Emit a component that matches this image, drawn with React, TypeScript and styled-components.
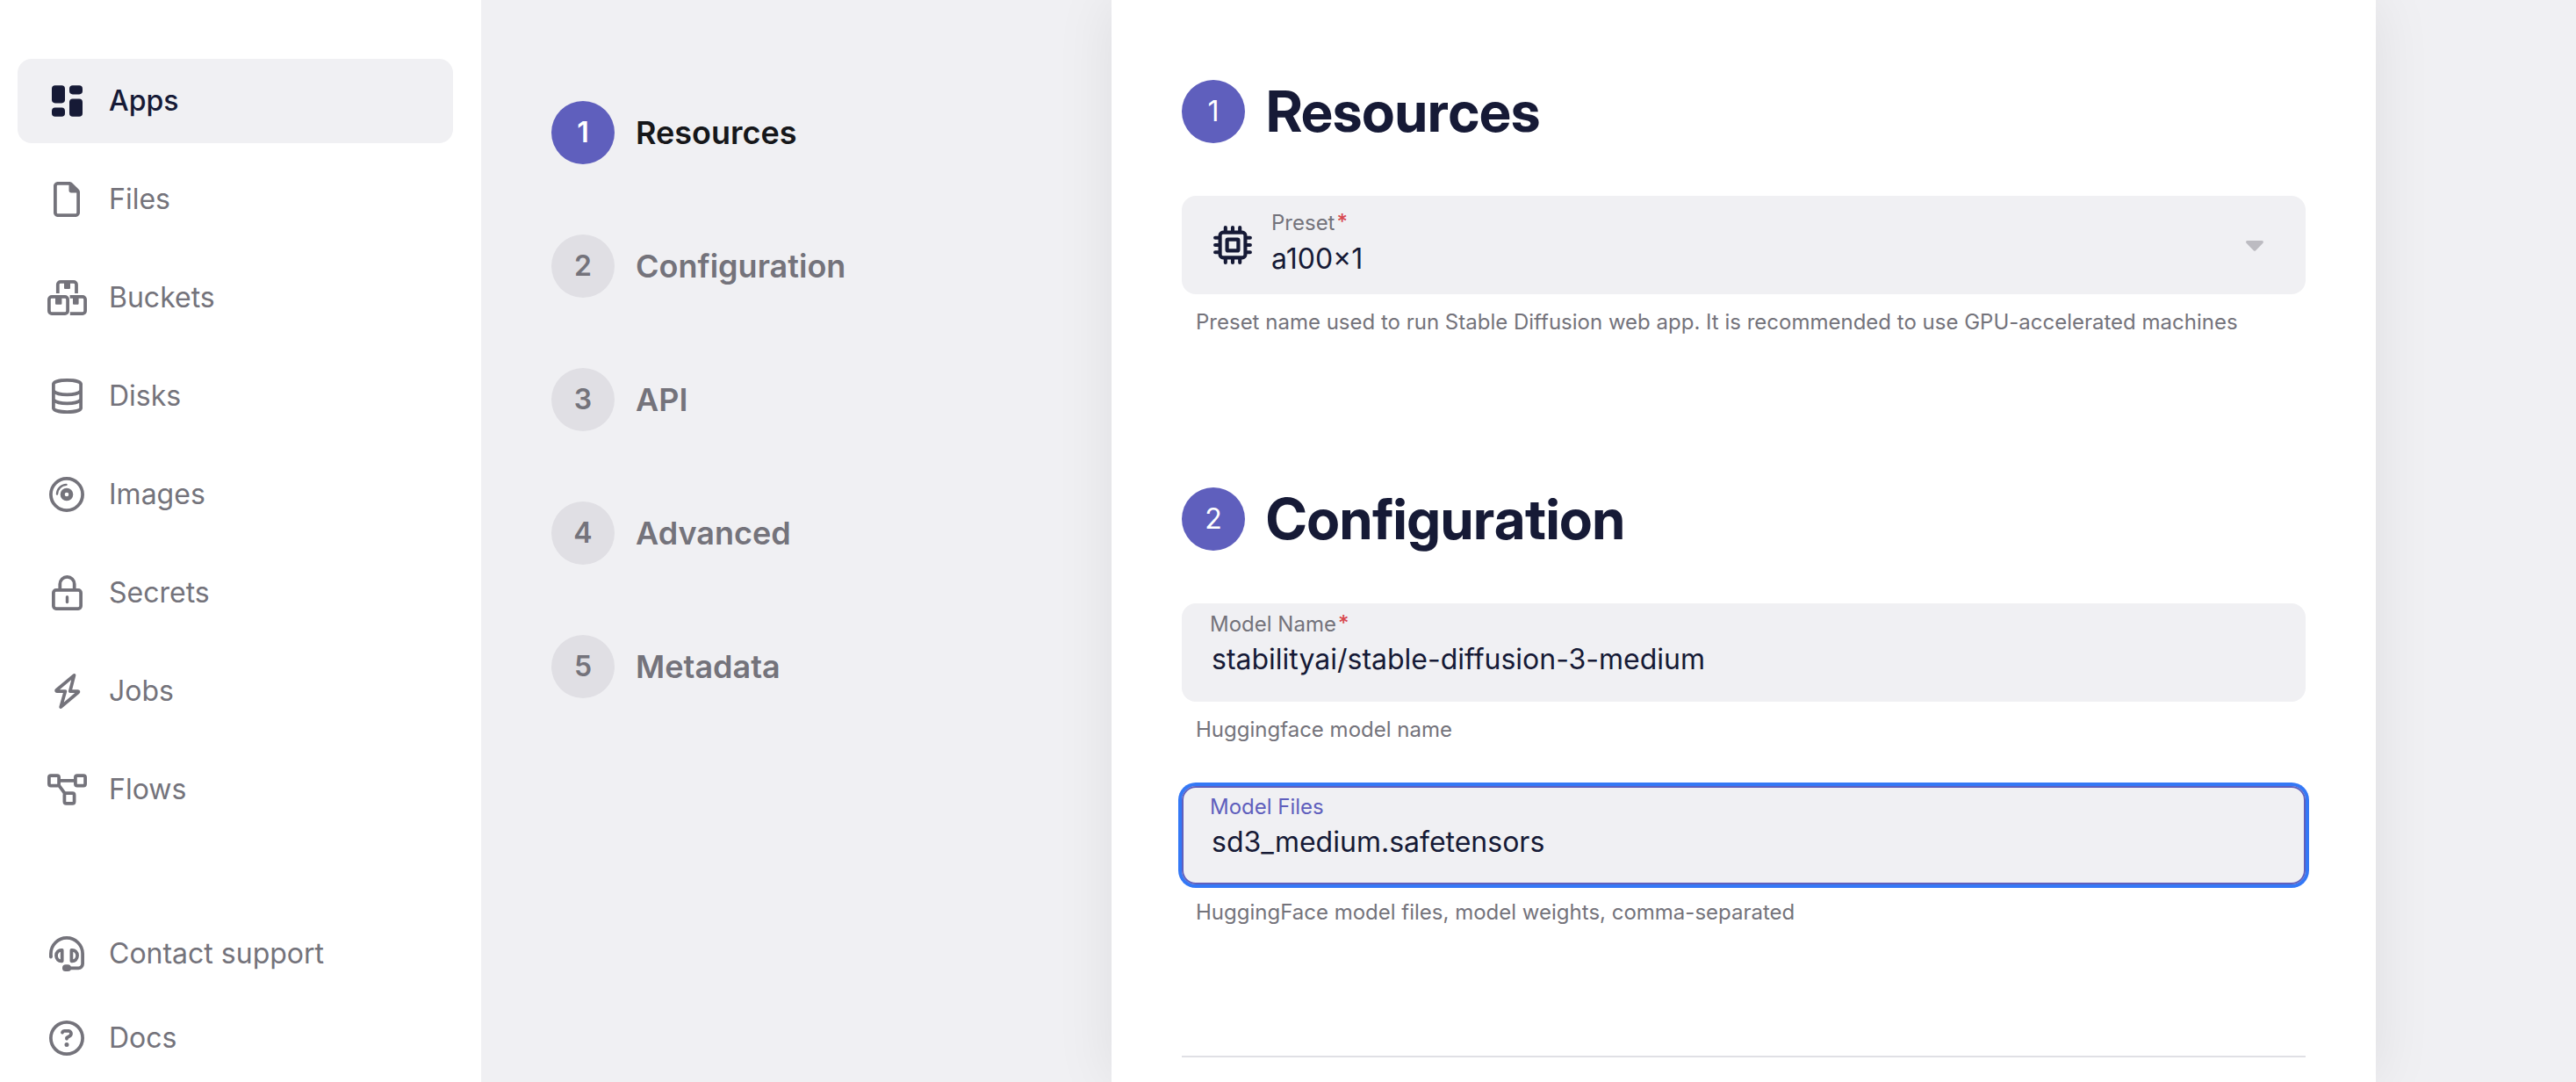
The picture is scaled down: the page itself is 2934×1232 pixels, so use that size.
import React from "react";
import styled, { createGlobalStyle, css } from "styled-components";
import { FaRegCircleQuestion, FaRegFile } from "react-icons/fa6";

const color = {
  page: "#f0f0f3",
  surface: "#ffffff",
  ink: "#161a36",
  black: "#16171a",
  muted: "#74737b",
  accent: "#5f5fbd",
  badge: "#e0dfe4",
  line: "#e0e0e5",
  ring: "#3478f6",
  caret: "#bcbbc1",
  danger: "#d8494f",
};

const GlobalStyle = createGlobalStyle`
  *, *::before, *::after { box-sizing: border-box; }
  body {
    margin: 0;
    background: ${color.page};
    color: ${color.ink};
    font-family: Inter, "Liberation Sans", sans-serif;
    font-size: 32px;
    font-variation-settings: "opsz" 16;
    line-height: 40px;
  }
`;

const Layout = styled.div`
  display: flex;
  min-height: 100vh;
`;

const Sidebar = styled.aside`
  flex: 0 0 548px;
  padding: 67px 32px 0 20px;
  background: ${color.surface};
`;

const NavList = styled.nav<{ $gap: number }>`
  display: flex;
  flex-direction: column;
  gap: ${(p) => p.$gap}px;

  & + & {
    margin-top: 91px;
  }
`;

const NavLink = styled.a<{ $active?: boolean }>`
  display: flex;
  align-items: center;
  gap: 24px;
  height: 96px;
  padding: 0 32px;
  border-radius: 16px;
  color: ${color.muted};
  text-decoration: none;

  ${(p) =>
    p.$active &&
    css`
      background: ${color.page};
      color: ${color.ink};
      font-weight: 500;
    `}
`;

const IconSlot = styled.span`
  display: flex;
  flex: none;
  align-items: center;
  justify-content: center;
  width: 48px;
  height: 48px;
`;

const Main = styled.main`
  display: flex;
  flex: 1;
  min-width: 0;
`;

const StepList = styled.ol`
  display: flex;
  flex: 0 0 718px;
  flex-direction: column;
  gap: 80px;
  margin: 0;
  padding: 115px 80px 0;
  list-style: none;
`;

const StepLink = styled.a<{ $active?: boolean }>`
  display: flex;
  align-items: center;
  gap: 24px;
  color: ${(p) => (p.$active ? color.black : color.muted)};
  font-size: 36px;
  font-weight: 600;
  font-variation-settings: "opsz" 18;
  text-decoration: none;
`;

const Badge = styled.span<{ $filled?: boolean; $strong?: boolean }>`
  display: flex;
  flex: none;
  align-items: center;
  justify-content: center;
  width: 72px;
  height: 72px;
  border-radius: 50%;
  background: ${(p) => (p.$filled ? color.accent : color.badge)};
  color: ${(p) => (p.$filled ? color.surface : color.muted)};
  font-size: 32px;
  font-weight: ${(p) => (p.$strong ? 600 : 400)};
`;

const Panel = styled.form`
  flex: 0 1 1440px;
  min-width: 0;
  padding: 91px 80px 28px;
  background: ${color.surface};
  box-shadow: 0 0 64px rgba(0, 0, 0, 0.08);
`;

const Section = styled.section`
  & + & {
    margin-top: 124px;
  }
`;

const SectionHeader = styled.header`
  display: flex;
  align-items: center;
  gap: 24px;
  margin-bottom: 60px;
`;

const Title = styled.h2`
  margin: 0;
  font-family: "Inter Display", Inter, "Liberation Sans", sans-serif;
  font-size: 64px;
  font-weight: 700;
  font-variation-settings: "opsz" 32;
  line-height: 72px;
`;

const Field = styled.div`
  padding-bottom: 48px;
`;

const FieldBox = styled.div<{ $focused?: boolean }>`
  display: flex;
  height: 112px;
  padding: 0 32px;
  border-radius: 16px;
  background: ${color.page};
  box-shadow: ${(p) =>
    p.$focused ? `inset 0 0 0 2px ${color.accent}, 0 0 0 4px ${color.ring}` : "none"};
`;

const FieldText = styled.div`
  display: flex;
  flex: 1;
  flex-direction: column;
  gap: 5px;
  min-width: 0;
  padding-top: 9px;
`;

const PresetBox = styled(FieldBox)`
  align-items: center;
  gap: 20px;
  padding: 0 38px 0 34px;

  ${FieldText} {
    align-self: stretch;
    gap: 6px;
    padding-top: 16px;
  }
`;

const Label = styled.label<{ $focused?: boolean }>`
  display: flex;
  align-items: flex-start;
  gap: 2px;
  color: ${(p) => (p.$focused ? color.accent : color.muted)};
  font-size: 24px;
  font-variation-settings: "opsz" 14;
  line-height: 30px;
`;

const Required = styled.span`
  color: ${color.danger};
  font-weight: 500;
  line-height: 28px;
`;

const control = css`
  width: 100%;
  height: 40px;
  border: 0;
  outline: 0;
  background: transparent;
  color: ${color.ink};
  font: inherit;
  font-variation-settings: "opsz" 16;
`;

const Input = styled.input`
  ${control}
  padding: 0 2px;
`;

const Select = styled.select`
  ${control}
  padding: 0;
  appearance: none;
`;

const Help = styled.p`
  margin: 16px 0 0;
  padding: 0 16px;
  color: ${color.muted};
  font-size: 24px;
  font-variation-settings: "opsz" 14;
  line-height: 32px;
`;

const Divider = styled.hr`
  height: 2px;
  margin: 99px 0 0;
  border: 0;
  background: ${color.line};
`;

function Line({ children, width = 3.75 }: { children: React.ReactNode; width?: number }) {
  return (
    <svg
      width="48"
      height="48"
      viewBox="0 0 48 48"
      fill="none"
      stroke="currentColor"
      strokeWidth={width}
      aria-hidden="true"
    >
      {children}
    </svg>
  );
}

const AppsIcon = () => (
  <svg width="48" height="48" viewBox="0 0 48 48" fill="currentColor" aria-hidden="true">
    <rect x="7" y="6.2" width="15" height="20.2" rx="3.8" />
    <rect x="27" y="6.2" width="15" height="10.2" rx="3.8" />
    <rect x="7" y="31.4" width="15" height="10.4" rx="3.8" />
    <rect x="27" y="21.4" width="15" height="20.4" rx="3.8" />
  </svg>
);

const BucketsIcon = () => (
  <Line>
    <path d="M13.8 19V9a3.1 3.1 0 0 1 3.1-3.1h15A3.1 3.1 0 0 1 35 9v10" />
    <rect x="3.9" y="22.9" width="21.2" height="19.2" rx="3.1" />
    <path d="M27.6 22.9h14.4a3.1 3.1 0 0 1 3.1 3.1v13a3.1 3.1 0 0 1-3.1 3.1H27.8" />
    <path
      d="M21 5h7v8a1 1 0 0 1-1 1h-5a1 1 0 0 1-1-1zM11 22h7.4v8.7a1 1 0 0 1-1 1H12a1 1 0 0 1-1-1zM31 22h6.6v8.7a1 1 0 0 1-1 1H32a1 1 0 0 1-1-1z"
      fill="currentColor"
      stroke="none"
    />
  </Line>
);

const DisksIcon = () => (
  <Line>
    <path d="M8.9 10.2C9.4 7.7 15.6 5.9 24.5 5.9s15.1 1.8 15.6 4.3v27.6c-.5 2.5-6.7 4.3-15.6 4.3S9.4 40.3 8.9 37.8z" />
    <path d="M8.9 18.3c2.5 2.4 8.5 4 15.6 4s13.1-1.6 15.6-4M8.9 28.3c2.5 2.4 8.5 4 15.6 4s13.1-1.6 15.6-4" />
  </Line>
);

const ImagesIcon = () => (
  <Line>
    <circle cx="24" cy="24" r="18.1" />
    <circle cx="24" cy="24" r="4.8" strokeWidth="5" />
    <path d="M13 23.5A10.8 10.8 0 0 1 23.5 12.9" strokeWidth="2.4" strokeLinecap="round" />
  </Line>
);

const SecretsIcon = () => (
  <Line>
    <rect x="8.9" y="20.9" width="31.2" height="21.2" rx="3" />
    <path d="M16.3 20.5V14a8.2 8.2 0 0 1 16.4 0v6.5" />
    <path d="M24.5 28.7v5.8" strokeWidth="3.4" strokeLinecap="round" />
  </Line>
);

const JobsIcon = () => (
  <Line>
    <path
      d="M32.5 5.9 12.4 22.8c-.6.5-.3 1.2.4 1.2h9.6L17.2 42.1 37.1 25.2c.6-.5.3-1.2-.4-1.2h-8.9z"
      strokeLinejoin="round"
    />
  </Line>
);

const FlowsIcon = () => (
  <Line>
    <rect x="3.9" y="8.1" width="11.2" height="11.4" rx="2" />
    <rect x="33.9" y="8.1" width="11.2" height="11.4" rx="2" />
    <rect x="21.4" y="28.2" width="11.2" height="11.6" rx="2" />
    <path d="M16 13.9h17M14.6 18.7l7.4 10" />
  </Line>
);

const SupportIcon = () => (
  <Line>
    <path d="M5.9 27.5V24a18.1 18.1 0 0 1 36.2 0v11.5a4.8 4.8 0 0 1-4.8 4.8H26" />
    <path d="M5.9 27v.6" strokeLinecap="round" />
    <path
      d="M18.7 19.9v12.4c-3.9.4-6.7-2.3-6.7-6.2s2.8-6.6 6.7-6.2zM29.4 19.9v12.4c3.9.4 6.7-2.3 6.7-6.2s-2.8-6.6-6.7-6.2z"
      strokeLinejoin="round"
    />
    <rect x="19" y="36.3" width="10" height="7.7" rx="3.85" fill="currentColor" stroke="none" />
  </Line>
);

const ChipIcon = () => (
  <svg width="48" height="48" viewBox="-2 -2 48 48" fill="none" stroke="currentColor" strokeWidth="4.1" aria-hidden="true">
    <rect x="7.6" y="7.6" width="28.8" height="28.8" rx="3.5" />
    <rect x="15.6" y="15.6" width="12.8" height="12.8" rx="1" strokeWidth="4.2" />
    <path
      d="M13.8 2.1V7M22 2.1V7M30.2 2.1V7M13.8 37v4.9M22 37v4.9M30.2 37v4.9M2.1 13.8H7M2.1 22H7M2.1 30.2H7M37 13.8h4.9M37 22h4.9M37 30.2h4.9"
      strokeLinecap="round"
    />
  </svg>
);

const CaretIcon = () => (
  <svg width="40" height="40" viewBox="0 0 40 40" fill={color.caret} aria-hidden="true">
    <path d="M11.7 15h16.6c1.5 0 2.2 1.7 1.2 2.7l-8.3 8.5a1.7 1.7 0 0 1-2.4 0l-8.3-8.5c-1-1-.3-2.7 1.2-2.7z" />
  </svg>
);

const mainNav = [
  { name: "Apps", icon: <AppsIcon />, active: true },
  { name: "Files", icon: <FaRegFile size={40} /> },
  { name: "Buckets", icon: <BucketsIcon /> },
  { name: "Disks", icon: <DisksIcon /> },
  { name: "Images", icon: <ImagesIcon /> },
  { name: "Secrets", icon: <SecretsIcon /> },
  { name: "Jobs", icon: <JobsIcon /> },
  { name: "Flows", icon: <FlowsIcon /> },
];

const helpNav = [
  { name: "Contact support", icon: <SupportIcon /> },
  { name: "Docs", icon: <FaRegCircleQuestion size={40} /> },
];

const steps = ["Resources", "Configuration", "API", "Advanced", "Metadata"];

type NavItem = { name: string; icon: React.ReactNode; active?: boolean };

function Nav({ items, gap, label }: { items: NavItem[]; gap: number; label: string }) {
  return (
    <NavList $gap={gap} aria-label={label}>
      {items.map((item) => (
        <NavLink
          key={item.name}
          href={`#${item.name.toLowerCase().replace(" ", "-")}`}
          $active={item.active}
          aria-current={item.active ? "page" : undefined}
        >
          <IconSlot>{item.icon}</IconSlot>
          {item.name}
        </NavLink>
      ))}
    </NavList>
  );
}

function SectionTitle({ number, children }: { number: number; children: string }) {
  return (
    <SectionHeader>
      <Badge $filled>{number}</Badge>
      <Title>{children}</Title>
    </SectionHeader>
  );
}

type TextFieldProps = {
  id: string;
  label: string;
  value: string;
  help: string;
  required?: boolean;
  focused?: boolean;
};

function TextField({ id, label, value, help, required, focused }: TextFieldProps) {
  return (
    <Field>
      <FieldBox $focused={focused}>
        <FieldText>
          <Label htmlFor={id} $focused={focused}>
            {label}
            {required && <Required>*</Required>}
          </Label>
          <Input id={id} type="text" defaultValue={value} required={required} aria-describedby={`${id}-help`} />
        </FieldText>
      </FieldBox>
      <Help id={`${id}-help`}>{help}</Help>
    </Field>
  );
}

export default function App() {
  return (
    <>
      <GlobalStyle />
      <Layout>
        <Sidebar>
          <Nav items={mainNav} gap={16} label="Main" />
          <Nav items={helpNav} gap={0} label="Help" />
        </Sidebar>
        <Main>
          <StepList>
            {steps.map((step, index) => (
              <li key={step}>
                <StepLink href={`#step-${index + 1}`} $active={index === 0}>
                  <Badge $filled={index === 0} $strong>
                    {index + 1}
                  </Badge>
                  {step}
                </StepLink>
              </li>
            ))}
          </StepList>
          <Panel>
            <Section id="step-1">
              <SectionTitle number={1}>Resources</SectionTitle>
              <Field>
                <PresetBox>
                  <IconSlot>
                    <ChipIcon />
                  </IconSlot>
                  <FieldText>
                    <Label htmlFor="preset">
                      Preset
                      <Required>*</Required>
                    </Label>
                    <Select id="preset" defaultValue="a100" required aria-describedby="preset-help">
                      <option value="a100">a100×1</option>
                    </Select>
                  </FieldText>
                  <CaretIcon />
                </PresetBox>
                <Help id="preset-help">
                  Preset name used to run Stable Diffusion web app. It is recommended to use GPU-accelerated machines
                </Help>
              </Field>
            </Section>
            <Section id="step-2">
              <SectionTitle number={2}>Configuration</SectionTitle>
              <TextField
                id="model-name"
                label="Model Name"
                value="stabilityai/stable-diffusion-3-medium"
                help="Huggingface model name"
                required
              />
              <TextField
                id="model-files"
                label="Model Files"
                value="sd3_medium.safetensors"
                help="HuggingFace model files, model weights, comma-separated"
                focused
              />
            </Section>
            <Divider />
          </Panel>
        </Main>
      </Layout>
    </>
  );
}
